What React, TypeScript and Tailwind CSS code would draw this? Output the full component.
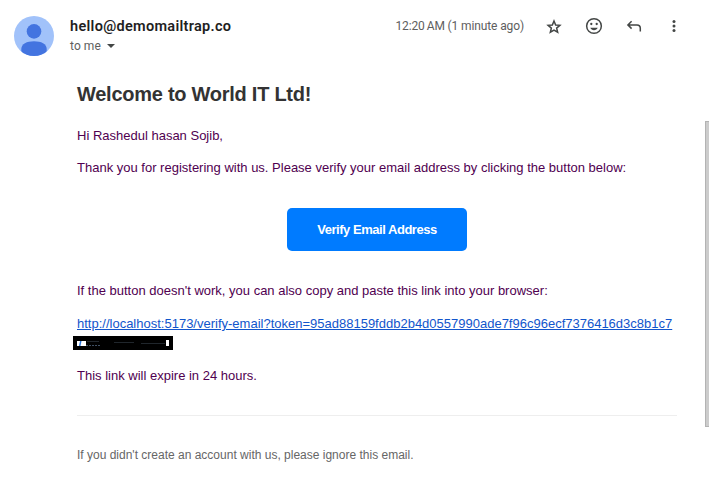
function Avatar() {
  return (
    <svg className="block size-10 shrink-0" viewBox="0 0 40 40" aria-hidden="true">
      <defs>
        <clipPath id="avatar-clip">
          <circle cx="20" cy="20" r="20" />
        </clipPath>
      </defs>
      <g clipPath="url(#avatar-clip)">
        <rect width="40" height="40" fill="#a1c2fa" />
        <circle cx="20" cy="15.4" r="7.3" fill="#4374e0" />
        <path d="M7.300 33c0-5 5.500-7.700 12.700-7.700s12.700 2.700 12.700 7.700v8H7.300z" fill="#4374e0" />
      </g>
    </svg>
  );
}

function Actions() {
  return (
    <div className="flex items-center gap-5 text-[#444746]">
      <svg className="size-5" viewBox="0 0 20 20" fill="none" stroke="currentColor" strokeWidth="1.500" aria-label="Star">
        <path d="M10 5 11.650 8.950 15.900 9.300 12.650 12.100 13.650 16.250 10 14.050 6.350 16.250 7.350 12.100 4.100 9.300 8.350 8.950Z" />
      </svg>
      <svg className="size-5" viewBox="0 0 20 20" fill="none" aria-label="Add reaction">
        <circle cx="10" cy="10" r="7.350" stroke="currentColor" strokeWidth="1.500" />
        <circle cx="7.300" cy="8" r="1.150" fill="currentColor" />
        <circle cx="12.700" cy="8" r="1.150" fill="currentColor" />
        <path d="M6.300 11.700h7.400c-.6 1.500-2 2.500-3.700 2.500s-3.100-1-3.700-2.500z" fill="currentColor" />
      </svg>
      <svg className="size-5" viewBox="0 0 20 20" fill="none" stroke="currentColor" strokeWidth="1.500" aria-label="Reply">
        <path d="M7.600 5.200 3.900 8.900l3.700 3.700M3.900 8.900H13c2 0 3.300 1.300 3.300 3.300v3.300" />
      </svg>
      <svg className="size-5" viewBox="0 0 20 20" fill="currentColor" aria-label="More">
        <circle cx="10" cy="5.500" r="1.500" />
        <circle cx="10" cy="10" r="1.500" />
        <circle cx="10" cy="14.500" r="1.500" />
      </svg>
    </div>
  );
}

export default function App() {
  return (
    <div className="flex h-[494px] w-[709px] flex-col overflow-hidden bg-white font-['Liberation_Sans',sans-serif]">
      <header className="flex h-[66px] shrink-0 pt-4 pr-[25px] pl-[14px] font-['Roboto',sans-serif]">
        <Avatar />
        <div className="ml-4 flex-1">
          <div className="h-5 text-[14.5px] leading-[22px] font-semibold tracking-[0.3px] text-[#1f1f1f]">
            hello@demomailtrap.co
          </div>
          <div className="flex h-5 items-center text-[12px] leading-5 tracking-[0.08px] text-[#5e5e5e]">
            to me
            <svg className="ml-1.5 h-1 w-2" viewBox="0 0 8 4" fill="#444746" aria-hidden="true">
              <path d="M0 0h8L4 4z" />
            </svg>
          </div>
        </div>
        <div className="flex h-5 items-center">
          <time className="mr-5 text-[12px] whitespace-nowrap text-[#5e5e5e]">
            <span className="tracking-[-0.120px]">12:20</span>
            <span className="ml-0.5 tracking-[-0.120px]">AM (1 minute ago)</span>
          </time>
          <Actions />
        </div>
      </header>
      <div className="flex flex-1 justify-between pl-[77px]">
        <main className="w-[600px] text-[13px] leading-5 whitespace-nowrap text-[#500050]">
          <h1 className="mt-3.5 h-7 text-[20px] leading-7 font-bold tracking-[-0.260px] text-[#333333]">Welcome to World IT Ltd!</h1>
          <p className="mt-[18px]">Hi Rashedul hasan Sojib,</p>
          <p className="mt-3">Thank you for registering with us. Please verify your email address by clicking the button below:</p>
          <div className="mt-[30px] flex justify-center">
            <button className="h-[43px] w-[180px] rounded-[5px] bg-[#007bff] text-[13px] font-bold tracking-[-0.470px] text-white">
              Verify Email Address
            </button>
          </div>
          <p className="mt-[30px]">If the button doesn't work, you can also copy and paste this link into your browser:</p>
          <a className="mt-[13px] block text-[#1155cc] underline" href="#verify">
            http://localhost:5173/verify-email?token=95ad88159fddb2b4d0557990ade7f96c96ecf7376416d3c8b1c7
          </a>
          <svg className="mt-[2px] -ml-1 block h-[14px] w-[100px]" viewBox="0 0 100 14" aria-hidden="true">
            <rect width="100" height="14" fill="#000000" />
            <rect x="4" y="5" width="9" height="5" fill="#ffffff" />
            <path d="M7 5h1.500L7.500 10H6z" fill="#2874db" />
            <path d="M13 9.500h14" stroke="#3f4f63" strokeDasharray="2 1" />
            <path d="M14 5.500h12M41 6.500h20M68 7.500h24" stroke="#20262c" />
            <rect x="93" y="4" width="3" height="6" fill="#ffffff" />
          </svg>
          <p className="mt-4">This link will expire in 24 hours.</p>
          <hr className="mt-[29px] border-t border-[#eeeeee]" />
          <p className="mt-[29px] text-[12px] text-[#666666]">If you didn't create an account with us, please ignore this email.</p>
        </main>
        <div className="mt-[55px] h-[306px] w-1 border-y border-l border-[#b3b3b3] bg-[#cccccc]" />
      </div>
    </div>
  );
}
